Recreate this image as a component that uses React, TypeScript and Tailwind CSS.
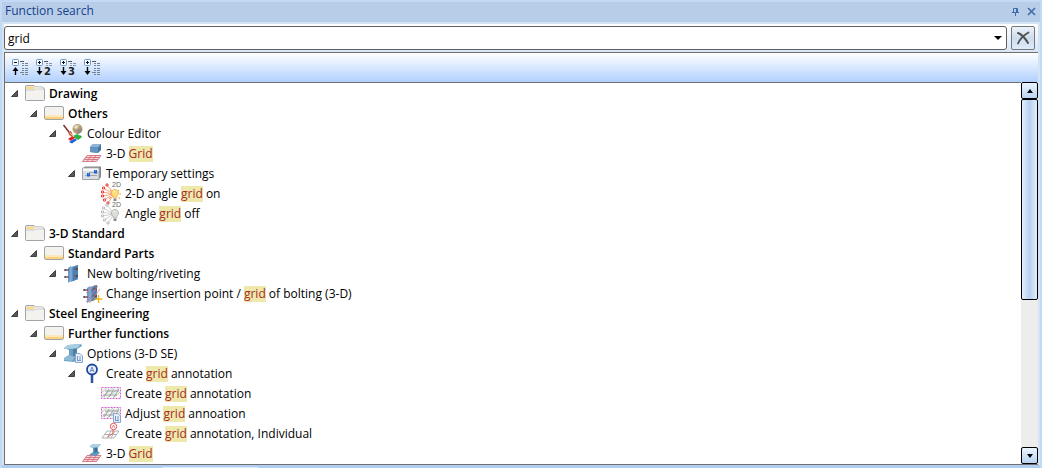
import { useState, type ReactNode } from "react";

type IconName =
  | "folder"
  | "group"
  | "colours"
  | "grid3d"
  | "settings"
  | "angleOn"
  | "angleOff"
  | "bolt"
  | "boltPlus"
  | "steel"
  | "marker"
  | "annotate"
  | "adjust"
  | "individual"
  | "steelGrid";

type Item = {
  icon: IconName;
  label: string;
  bold?: boolean;
  children?: Item[];
};

const items: Item[] = [
  {
    icon: "folder",
    label: "Drawing",
    bold: true,
    children: [
      {
        icon: "group",
        label: "Others",
        bold: true,
        children: [
          {
            icon: "colours",
            label: "Colour Editor",
            children: [
              { icon: "grid3d", label: "3-D Grid" },
              {
                icon: "settings",
                label: "Temporary settings",
                children: [
                  { icon: "angleOn", label: "2-D angle grid on" },
                  { icon: "angleOff", label: "Angle grid off" },
                ],
              },
            ],
          },
        ],
      },
    ],
  },
  {
    icon: "folder",
    label: "3-D Standard",
    bold: true,
    children: [
      {
        icon: "group",
        label: "Standard Parts",
        bold: true,
        children: [
          {
            icon: "bolt",
            label: "New bolting/riveting",
            children: [{ icon: "boltPlus", label: "Change insertion point / grid of bolting (3-D)" }],
          },
        ],
      },
    ],
  },
  {
    icon: "folder",
    label: "Steel Engineering",
    bold: true,
    children: [
      {
        icon: "group",
        label: "Further functions",
        bold: true,
        children: [
          {
            icon: "steel",
            label: "Options (3-D SE)",
            children: [
              {
                icon: "marker",
                label: "Create grid annotation",
                children: [
                  { icon: "annotate", label: "Create grid annotation" },
                  { icon: "adjust", label: "Adjust grid annoation" },
                  { icon: "individual", label: "Create grid annotation, Individual" },
                ],
              },
              { icon: "steelGrid", label: "3-D Grid" },
            ],
          },
        ],
      },
    ],
  },
];

const redGrid = (
  <g fill="#f6d5da" stroke="#d4707c" strokeWidth="0.9">
    <path d="M5 11.500H19L14.500 17.500H0.500Z" />
    <path d="M3.500 13.500H17.500M2 15.500H16M9.500 11.500L5 17.500M14 11.500L10 17.500" fill="none" />
  </g>
);

const beam = (
  <>
    <path d="M1 4L5 1L18 0L19 2L14 5V11L16 13L11 18L1 17V14L6 11V6Z" fill="#6a9fc4" />
    <path d="M1 4L5 1L18 0L14 4.500L1 5Z" fill="#a9cde2" />
    <path d="M10 5L14 4.500V11L10 13Z" fill="#4a7fa6" />
    <path d="M1 14L6 11L12 13L9 17L1 16Z" fill="#8fbbd6" />
  </>
);

const page = (
  <g>
    <path d="M12.500 9.500H17L19.500 12V18.500H12.500Z" fill="#e6eefa" stroke="#8aa5d2" />
    <path d="M14.500 12V16M17 12V16M14 16.500H18" stroke="#5c80bb" strokeWidth="0.8" />
  </g>
);

const plate = (
  <>
    <path d="M5 4L8 2V17L5 19Z" fill="#6a9cc9" />
    <path d="M8 3L15 1V15L8 18Z" fill="#5f92c2" />
    <path d="M10 3L15 1V15L10 17Z" fill="#4b80b0" />
    <path d="M8 2V17" stroke="#a3c5e2" strokeWidth="0.8" />
    <g stroke="#7a5560" strokeWidth="1.6">
      <path d="M2 6H6M2 13H6M11 5H14M11 12H14" />
    </g>
    <path d="M2 5V7M2 12V14M14 4V6M14 11V13" stroke="#4a3640" strokeWidth="1.2" />
  </>
);

const hatch = (
  <>
    <path d="M1 4H19V14H1Z" fill="#f4f4f4" />
    <path d="M1 8L6 4M1 13L12 4M6 14L18 4M12 14L19 8" stroke="#a9cda4" strokeWidth="0.8" />
    <path d="M2 11H16M4 7H18M3 13L8 5M8 13L13 5M13 13L18 5" stroke="#9a9aa0" strokeWidth="0.9" />
    <path d="M0.500 3.500H19.500V14.500H0.500Z" fill="none" stroke="#d45fd8" strokeDasharray="2 1" />
  </>
);

function Angle({ on }: { on?: boolean }) {
  const line = on ? "#f58a5c" : "#c4c4c4";
  const dot = on ? "#e51b1b" : "#b0b0b0";
  return (
    <>
      <path d="M13 10L6 1M13 10L2 4M13 10L1 8M13 10L1 12M13 10L3 16M13 10L7 19" stroke={line} strokeWidth="0.8" />
      <g fill="#fff" stroke={dot} strokeWidth="0.8">
        <path d="M5 0H7V2H5ZM1.500 3H3.500V5H1.500ZM0.500 7H2.500V9H0.500ZM0.500 11H2.500V13H0.500ZM2.500 15H4.500V17H2.500ZM6 18H8V20H6Z" />
      </g>
      {on && (
        <path d="M9 6L10.500 7.500M18 6L17 7.500M18.500 10H20M17.500 13L19 15M10 13L8 15" stroke="#f59a2c" />
      )}
      <path
        d="M14 5.500C11.500 5.500 10.500 7 10.500 9C10.500 11 12 11.500 12.500 14H15.500C16 11.500 17.500 11 17.500 9C17.500 7 16.500 5.500 14 5.500Z"
        fill={on ? "#ffdc78" : "#dcdcd8"}
        stroke={on ? "#e8b04e" : "#a9a9a6"}
        strokeWidth="0.7"
      />
      <path d="M12.500 8L14 7" stroke="#fff" />
      <path d="M12.500 14.500H15.500V17H12.500Z" fill="#8a8a8a" />
      <text x="11" y="3" fontSize="7" fill="#666" className="font-['Liberation_Sans',sans-serif]">
        2D
      </text>
    </>
  );
}

const icons: Record<IconName, ReactNode> = {
  folder: (
    <>
      <path
        d="M0.500 3Q0.500 1.500 2 1.500H9L10.500 3H17.500L19.500 5V15.500Q19.500 16.500 18.500 16.500H1.500Q0.500 16.500 0.500 15.500Z"
        fill="#f3f2ef"
        stroke="#a0a4a6"
      />
      <path d="M1.500 2.500H9V5H1.500Z" fill="#f9d98a" />
      <path d="M10.500 3.500H17L18.500 5.500H10.500Z" fill="#fff" />
      <path d="M1 6H9.500L10.500 5H19" fill="none" stroke="#c9c8c3" />
    </>
  ),
  group: (
    <>
      <rect x="0.500" y="2.500" width="19" height="13" rx="1.500" fill="#f3f2ef" stroke="#a0a4a6" />
      <path d="M1 11H19V13H1Z" fill="#fbe9bd" />
      <path d="M1 13H19V15H1Z" fill="#fbd27a" />
    </>
  ),
  colours: (
    <>
      <path d="M5 15L10 11.500L13 13L8 17Z" fill="#e81e25" />
      <path d="M10 12L14 10L18 12L13 14.500Z" fill="#25b944" />
      <path d="M6 18L12 14.500L14 16L9 19.500Z" fill="#1764df" />
      <path d="M12 14L18 11.500L19 13L15 16Z" fill="#2dad3f" />
      <circle cx="14.500" cy="5" r="5" fill="#b39e7e" />
      <path d="M10 4A5 5 0 0 1 17 1L14 5Z" fill="#cfc09e" />
      <path d="M14 6L19 4A5 5 0 0 1 14 10Z" fill="#998a7d" />
      <circle cx="13" cy="3" r="1.500" fill="#eee4ca" />
      <path d="M0.500 1L6 8" stroke="#7d3228" strokeWidth="1.500" />
      <path d="M5 8L8 7L11 14L6 11Z" fill="#c86346" />
      <path d="M7 9L11 13" stroke="#edc1a2" />
    </>
  ),
  grid3d: (
    <>
      {redGrid}
      <path d="M8 3L11 0H19V6L16 9L8 8Z" fill="#44749f" />
      <path d="M8 3L11 0H19L16 3.500Z" fill="#8fb4d8" />
      <path d="M8 3L16 3.500V9L8 8Z" fill="#6494c0" />
    </>
  ),
  settings: (
    <>
      <path d="M1 4L3 2.500H19V13L17 15.500H1Z" fill="#85898d" />
      <path d="M0.500 4H17V15.500H0.500Z" fill="#dcdfe1" stroke="#a0a4a8" />
      <path d="M1 4.500H16.500V7H1Z" fill="#f7f7f7" />
      <path d="M3 11.500H15M7 8.500H16" stroke="#a3a8ab" />
      <path d="M5 9H8V12.500H5ZM12 6H15V9.500H12Z" fill="#1a5fd6" />
      <path d="M6 10H7M13 7H14" stroke="#6eb7ff" />
    </>
  ),
  angleOn: <Angle on />,
  angleOff: <Angle />,
  bolt: plate,
  boltPlus: (
    <>
      {plate}
      <path d="M4 18L16 2M7 19L18 5M4 9L13 1" stroke="#e87c87" strokeWidth="0.8" />
      <path d="M16.500 11V19M12.500 15H20.500" stroke="#f3b71a" strokeWidth="1.400" />
    </>
  ),
  steel: (
    <>
      {beam}
      {page}
    </>
  ),
  marker: (
    <>
      <path d="M10 10V19" stroke="#2a529f" strokeWidth="2.500" />
      <circle cx="10" cy="5.500" r="5" fill="#e8effb" stroke="#1f469e" strokeWidth="1.800" />
      <path d="M8 8L10 3L12 8M8.500 6.500H11.500" fill="none" stroke="#6f88c1" />
    </>
  ),
  annotate: hatch,
  adjust: (
    <>
      {hatch}
      {page}
    </>
  ),
  individual: (
    <>
      <path d="M6 7H18L13 14H1ZM4 10.500H16M10 7L6 14M14 7L10 14" fill="none" stroke="#b0b0b0" />
      <path d="M12 5V9L7 13" fill="none" stroke="#e85b5b" />
      <circle cx="12.500" cy="2.500" r="3.200" fill="#fff" stroke="#ed5454" />
      <path d="M11 4L12.500 1L14 4" fill="none" stroke="#e65c5c" strokeWidth="0.800" />
    </>
  ),
  steelGrid: (
    <>
      {redGrid}
      <path d="M8 2L11 0H19L15.500 4V7L18 9L14 12L7 11L11 8V4Z" fill="#5f98bd" />
      <path d="M8 2L11 0H19L15.500 3.500H8Z" fill="#add0e5" />
      <path d="M12.500 4L15.500 3.500V8L12.500 9Z" fill="#3a709a" />
    </>
  ),
};

function Label({ text, query }: { text: string; query: string }) {
  const at = query ? text.toLowerCase().indexOf(query.toLowerCase()) : -1;
  if (at < 0) return <>{text}</>;
  return (
    <>
      {text.slice(0, at)}
      <mark className="inline-block h-4 bg-[#eee8aa] leading-4 text-[#a52a2a]">{text.slice(at, at + query.length)}</mark>
      {text.slice(at + query.length)}
    </>
  );
}

function TreeItem({ item, query }: { item: Item; query: string }) {
  const [open, setOpen] = useState(true);
  return (
    <li role="treeitem" aria-expanded={item.children ? open : undefined}>
      <div className={`flex h-5 items-center whitespace-pre ${item.bold ? "font-semibold" : ""}`}>
        {item.children ? (
          <button
            aria-label={`Toggle ${item.label}`}
            onClick={() => setOpen(!open)}
            className="flex h-5 w-5 shrink-0 items-center justify-center"
          >
            <svg viewBox="0 0 8 8" className={`size-2 ${open ? "" : "-rotate-45"}`} aria-hidden="true">
              <path d="M6.500 0.500V6.500H0.500Z" fill="#595959" stroke="#262626" strokeWidth="0.8" />
            </svg>
          </button>
        ) : (
          <span className="w-5 shrink-0" />
        )}
        <svg viewBox="0 0 20 20" fill="none" className="size-5 shrink-0 overflow-visible" aria-hidden="true">
          {icons[item.icon]}
        </svg>
        <span className="pl-1">
          <Label text={item.label} query={query} />
        </span>
      </div>
      {item.children && open && (
        <ul role="group" className="pl-[19px]">
          {item.children.map((child) => (
            <TreeItem key={child.label} item={child} query={query} />
          ))}
        </ul>
      )}
    </li>
  );
}

function LevelIcon({ level, collapse }: { level?: string; collapse?: boolean }) {
  return (
    <svg viewBox="0 0 18 18" className="h-[18px] w-[18px]" fill="none" aria-hidden="true">
      <rect x="1.500" y="0.500" width="6" height="6" rx="1" fill="#f8fbff" stroke="#6f97c6" />
      <path d="M3 3.500H6" stroke="#111" />
      {!collapse && <path d="M4.500 2V5" stroke="#111" />}
      {collapse ? (
        <path d="M4.500 8L1.500 12H3.800V16H5.200V12H7.500Z" fill="#000" />
      ) : (
        <path d="M4.500 16L1.500 12H3.800V8H5.200V12H7.500Z" fill="#000" />
      )}
      <path d="M9 2.500H13" stroke="#555" />
      {level ? (
        <>
          <path d="M11 4.500H13M14 4.500H17M11 6.500H13M14 6.500H17" stroke="#8b95a3" />
          <text x="9" y="16" fontSize="10" fontWeight="700" fill="#222" className="font-['DejaVu_Sans',sans-serif]">
            {level}
          </text>
        </>
      ) : (
        <path
          d="M11 4.500H13M14 4.500H17M11 6.500H13M14 6.500H17M11 9.500H13M14 9.500H17M11 11.500H13M14 11.500H17M9 13.500H13M14 13.500H17M11 15.500H13M14 15.500H17"
          stroke="#76828f"
        />
      )}
    </svg>
  );
}

const levels = [
  { name: "Collapse all", collapse: true },
  { name: "Expand to level 2", level: "2" },
  { name: "Expand to level 3", level: "3" },
  { name: "Expand all" },
];

const scrollButton =
  "flex h-[17px] shrink-0 items-center justify-center rounded-xs border border-black bg-linear-to-b from-[#edf5ff] to-[#b9d2f1]";

export default function App() {
  const [query, setQuery] = useState("grid");

  return (
    <main className="flex h-screen flex-col border-x-2 border-t-2 border-[#c3daf6] bg-[#d5e4f5] font-['Open_Sans','Noto_Sans',sans-serif] text-xs text-black">
      <header className="flex h-5 shrink-0 items-center bg-[#b8cee8] pr-px pb-0.5 pl-[3px] text-[#15428b]">
        <h1 className="flex-1">Function search</h1>
        <button aria-label="Pin panel" className="flex size-4 items-center justify-center">
          <svg viewBox="0 0 9 9" className="size-[9px]" fill="none" stroke="#416aa8" aria-hidden="true">
            <path d="M2.500 5.500V1.500H6.500V5.500M5.500 1.500V5.500M1 5.500H8M4.500 5.500V9" />
          </svg>
        </button>
        <button aria-label="Close panel" className="flex size-4 items-center justify-center">
          <svg viewBox="0 0 9 9" className="size-[9px]" fill="none" stroke="#416aa8" strokeWidth="1.600" aria-hidden="true">
            <path d="M1 1L8 8M8 1L1 8" />
          </svg>
        </button>
      </header>

      <section className="mx-0.5 mt-0.5 flex min-h-0 flex-1 flex-col">
        <div className="flex h-7 shrink-0 items-center gap-1 bg-linear-to-b from-white to-[#d7e5f6] pr-[3px]">
          <div className="flex h-6 min-w-0 flex-1 items-center rounded-[3px] border border-[#606060] bg-white">
            <input
              aria-label="Search functions"
              value={query}
              onChange={(e) => setQuery(e.target.value)}
              className="h-full min-w-0 flex-1 bg-transparent px-[3px] outline-none"
            />
            <button aria-label="Show previous searches" className="flex h-full w-4 items-center justify-center">
              <svg viewBox="0 0 8 4" className="h-1 w-2" aria-hidden="true">
                <path d="M0 0H8L4 4Z" fill="#000" />
              </svg>
            </button>
          </div>
          <button
            aria-label="Clear search"
            onClick={() => setQuery("")}
            className="flex size-6 items-center justify-center rounded-xs border border-[#74797f] bg-linear-to-b from-[#edf3fa] via-[#cddcec] to-[#dfebf9]"
          >
            <svg viewBox="0 0 14 14" className="size-3.5" fill="none" stroke="#505050" strokeLinecap="round" aria-hidden="true">
              <path d="M2 2C5 3 9 7 12 12" strokeWidth="2" />
              <path d="M12.500 1.500C8 4 4 8 2 12.500" strokeWidth="1.800" />
            </svg>
          </button>
        </div>

        <div className="flex min-h-0 flex-1 flex-col border-y border-l border-[#707070]">
          <div
            role="toolbar"
            aria-label="Tree levels"
            className="flex h-[30px] shrink-0 items-center gap-1.5 border-b border-[#707070] bg-linear-to-b from-white to-[#b1d0ff] pl-1.5"
          >
            {levels.map((l) => (
              <button key={l.name} aria-label={l.name}>
                <LevelIcon level={l.level} collapse={l.collapse} />
              </button>
            ))}
          </div>
          <div className="flex min-h-0 flex-1 bg-white">
            <ul role="tree" className="min-w-0 flex-1 overflow-hidden pt-px">
              {items.map((item) => (
                <TreeItem key={item.label} item={item} query={query} />
              ))}
            </ul>
            <div className="-mt-px flex w-[17px] shrink-0 flex-col bg-[#ededed]">
              <button aria-label="Scroll up" className={scrollButton}>
                <svg viewBox="0 0 6 4" className="h-1 w-1.5" aria-hidden="true">
                  <path d="M0 4L3 0L6 4Z" fill="#000" />
                </svg>
              </button>
              <div className="h-[201px] rounded-xs border border-black bg-linear-to-r from-[#e4effd] via-[#b7d0ef] to-[#e2eefc]" />
              <button aria-label="Scroll down" className={`${scrollButton} mt-auto`}>
                <svg viewBox="0 0 6 4" className="h-1 w-1.5" aria-hidden="true">
                  <path d="M0 0H6L3 4Z" fill="#000" />
                </svg>
              </button>
            </div>
          </div>
        </div>
      </section>

      <footer className="flex h-[3px] shrink-0 bg-[#b1cdf2]">
        <span className="mt-0.5 ml-40 w-24 bg-[#dbeafa]" />
      </footer>
    </main>
  );
}
